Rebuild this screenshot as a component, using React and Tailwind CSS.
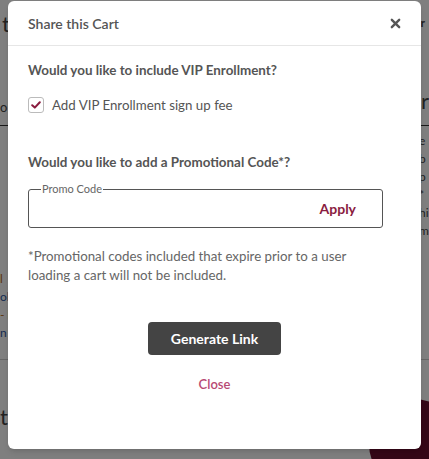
import { useState } from "react";

export default function App() {
  const [vip, setVip] = useState(true);
  const [promo, setPromo] = useState("");

  return (
    <div className="relative h-[459px] w-[429px] overflow-hidden bg-white font-['Lato',sans-serif] text-[#444]">
      {/* page behind the dialog */}
      <div className="flex h-full flex-col">
        <div className="flex h-[46px] items-center justify-between pl-[2px] pr-[4px] text-[22px]">
          <span>tl</span>
          <span className="text-[12px] font-bold">Ar</span>
        </div>
        <div className="flex h-[80px] items-end justify-between border-b border-[#333] pb-[8px] text-[13px]">
          <span>o</span>
          <span className="text-[22px]">r</span>
        </div>
        <div className="flex justify-end pt-[6px] text-[12px] leading-[18px]">
          <div className="w-[10px]">e<br />b<br />p<br />*<br />hi<br />m</div>
        </div>
        <div className="mt-[30px] flex flex-col text-[12px] leading-[18px]">
          <span className="text-[#b86e18]">l</span>
          <span className="text-[#2b55a3]">ol</span>
          <span className="text-[#b86e18]">- l</span>
          <span className="text-[#2b55a3]">n</span>
        </div>
        <div className="mt-auto h-[100px] border-t border-[#ccc] pt-[40px] text-[22px]">t</div>
      </div>
      <div className="absolute -bottom-[30px] -right-[30px] h-[90px] w-[90px] rounded-full bg-[#6b0f2e]" />
      <div className="absolute inset-0 bg-black/50" />

      {/* dialog */}
      <div className="absolute left-[8px] top-[1px] flex h-[448px] w-[413px] flex-col rounded-[6px] bg-white shadow-md">
        <div className="flex h-[45px] items-center justify-between border-b border-[#e6e6e6] pl-[20px] pr-[20px]">
          <h2 className="text-[14px] font-semibold text-[#555]">Share this Cart</h2>
          <button type="button" className="text-[#555]">
            <svg width="11" height="11" viewBox="0 0 12 12">
              <path d="M2 2 L10 10 M10 2 L2 10" stroke="currentColor" strokeWidth="2.6" strokeLinecap="round" />
            </svg>
          </button>
        </div>

        <div className="flex flex-col px-[20px] pt-[14px]">
          <p className="text-[13.4px] font-bold leading-[20px] text-[#555]">Would you like to include VIP Enrollment?</p>

          <label className="mt-[15px] flex cursor-pointer items-center gap-[8px]">
            <span
              onClick={() => setVip(!vip)}
              className="flex h-[16px] w-[16px] items-center justify-center rounded-[3px] border border-[#bbb] bg-white"
            >
              {vip && (
                <svg width="10" height="8" viewBox="0 0 10 8">
                  <path d="M1.2 4.2 L3.8 6.6 L8.8 1.2" fill="none" stroke="#8a1c3f" strokeWidth="2" strokeLinecap="round" strokeLinejoin="round" />
                </svg>
              )}
            </span>
            <span className="text-[13.3px] leading-[20px] text-[#555]">Add VIP Enrollment sign up fee</span>
          </label>

          <p className="mt-[37px] text-[13.4px] font-bold leading-[20px] text-[#555]">Would you like to add a Promotional Code*?</p>

          <div className="relative mt-[17px] flex h-[39px] w-[355px] items-center rounded-[3px] border border-[#555] pl-[12px] pr-[26px]">
            <span className="absolute -top-[8px] left-[12px] bg-white px-[1px] text-[11px] leading-[14px] text-[#666]">Promo Code</span>
            <input
              value={promo}
              onChange={(e) => setPromo(e.target.value)}
              className="h-full flex-1 bg-transparent text-[14px] outline-none"
            />
            <button type="button" className="text-[14px] font-bold text-[#8a1c3f]">Apply</button>
          </div>

          <p className="mt-[19px] w-[340px] text-[13.3px] leading-[19px] text-[#666]">
            *Promotional codes included that expire prior to a user loading a cart will not be included.
          </p>

          <div className="mt-[37px] flex flex-col items-center">
            <button type="button" className="h-[33px] w-[133px] rounded-[4px] bg-[#444] text-[14px] font-bold text-white">
              Generate Link
            </button>
            <button type="button" className="mt-[19px] text-[13px] font-semibold leading-[20px] text-[#b84a74]">
              Close
            </button>
          </div>
        </div>
      </div>
    </div>
  );
}
